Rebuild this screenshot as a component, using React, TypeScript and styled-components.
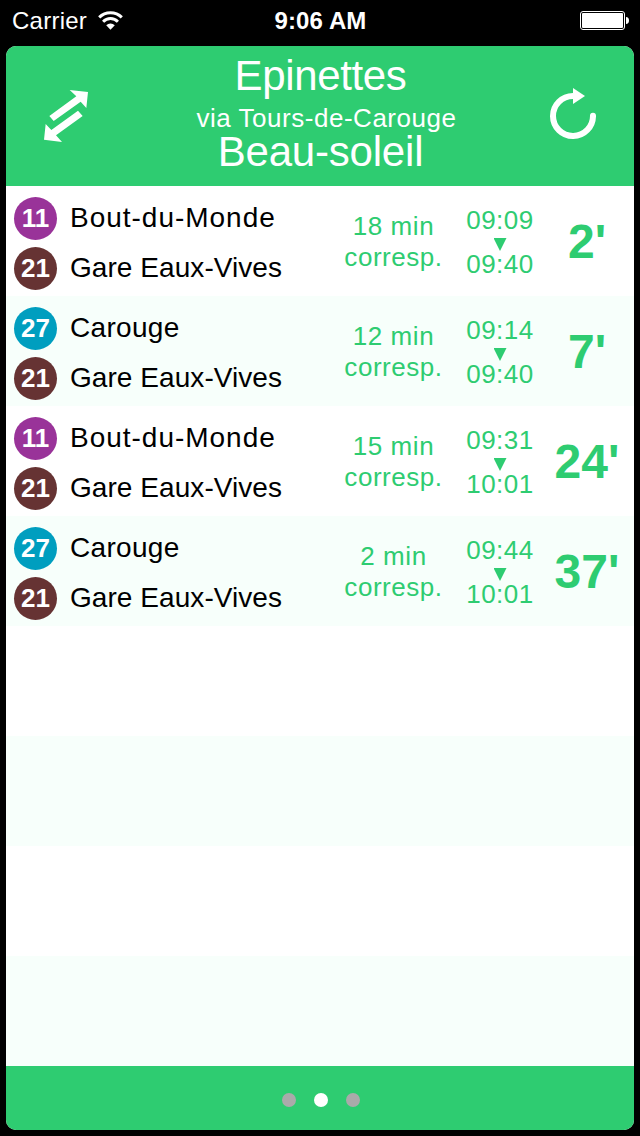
import React from "react";
import styled, { createGlobalStyle } from "styled-components";

const GREEN = "#2ecc71";

const GlobalStyle = createGlobalStyle`
  * { box-sizing: border-box; }
  body {
    margin: 0;
    background: #000;
    font-family: "Liberation Sans", Arial, sans-serif;
  }
`;

const Screen = styled.div`
  width: 640px;
  height: 1136px;
  display: flex;
  flex-direction: column;
  background: #000;
  overflow: hidden;
`;

const StatusBar = styled.header`
  height: 46px;
  flex: none;
  display: grid;
  grid-template-columns: 1fr auto 1fr;
  padding: 0 11px 5px 12px;
  align-items: center;
  color: #fff;
  font-size: 24px;
  line-height: 41px;
`;

const Carrier = styled.div`
  display: flex;
  align-items: center;
  gap: 11px;
  letter-spacing: 0.25px;
`;

const Clock = styled.div`
  font-weight: 700;
  letter-spacing: 0.1px;
`;

const BatterySlot = styled.div`
  display: flex;
  justify-content: flex-end;
`;

const Panel = styled.main`
  flex: none;
  height: 1084px;
  margin: 0 6px;
  border-radius: 10px;
  overflow: hidden;
  display: flex;
  flex-direction: column;
  background: #fff;
`;

const TripHeader = styled.section`
  flex: none;
  height: 140px;
  display: flex;
  align-items: center;
  justify-content: space-between;
  padding: 0 38px;
  background: ${GREEN};
  color: #fff;
`;

const IconButton = styled.button`
  display: flex;
  padding: 0;
  border: 0;
  background: none;
  color: inherit;
`;

const Titles = styled.div`
  align-self: flex-start;
  display: flex;
  flex-direction: column;
  align-items: center;
  padding: 1px 0 0 2px;
  white-space: nowrap;
`;

const Stop = styled.div<{ $line: number; $tracking: number }>`
  font-size: 42px;
  line-height: ${(p) => p.$line}px;
  letter-spacing: ${(p) => p.$tracking}px;
`;

const Via = styled.div`
  padding: 0 0 1px 12px;
  font-size: 26px;
  line-height: 26px;
  letter-spacing: 0.52px;
`;

const List = styled.ul`
  flex: 1;
  margin: 0;
  padding: 0;
  list-style: none;
`;

const Row = styled.li`
  height: 110px;
  display: grid;
  grid-template-columns: 327px 121px 92px 82px;
  align-items: center;
  color: ${GREEN};
  background: #fff;
  &:nth-child(even) {
    background: #f7fffb;
  }
`;

const Legs = styled.div`
  padding: 5px 0 0 8px;
`;

const Leg = styled.div`
  height: 50px;
  display: flex;
  align-items: center;
  gap: 13px;
  color: #000;
  white-space: nowrap;
`;

const Badge = styled.span<{ $color: string }>`
  width: 43px;
  height: 43px;
  flex: none;
  border-radius: 50%;
  background: ${(p) => p.$color};
  color: #fff;
  font-size: 26px;
  font-weight: 700;
  line-height: 43px;
  text-align: center;
`;

const Destination = styled.span<{ $tracking: number }>`
  font-size: 28px;
  line-height: 32px;
  padding-bottom: 2px;
  letter-spacing: ${(p) => p.$tracking}px;
`;

const Transfer = styled.div`
  padding-top: 2px;
  font-size: 26px;
  line-height: 31px;
  letter-spacing: 0.55px;
  text-align: center;
  white-space: pre-line;
`;

const Times = styled.div`
  display: flex;
  flex-direction: column;
  align-items: center;
  font-size: 26px;
  line-height: 26px;
  letter-spacing: 0.5px;
  padding-top: 2px;
`;

const DownMark = styled.span`
  width: 13px;
  height: 13px;
  margin: 5px 0 0;
  background: ${GREEN};
  clip-path: polygon(0 0, 100% 0, 50% 100%);
`;

const Wait = styled.div`
  padding-top: 2px;
  font-size: 48px;
  font-weight: 700;
  line-height: 56px;
  text-align: center;
`;

const Pager = styled.footer`
  flex: none;
  height: 64px;
  display: flex;
  align-items: center;
  justify-content: center;
  gap: 18px;
  padding: 4px 0 0 2px;
  background: ${GREEN};
`;

const Dot = styled.span<{ $active?: boolean }>`
  width: 14px;
  height: 14px;
  border-radius: 50%;
  background: ${(p) => (p.$active ? "#fff" : "#aaa")};
`;

const LINES = {
  "11": "#993399",
  "21": "#663333",
  "27": "#009ebf",
} as const;

type Line = keyof typeof LINES;

const TRACKING: Record<string, number> = {
  "Bout-du-Monde": 0.98,
  "Gare Eaux-Vives": 0.06,
  Carouge: 0.3,
};

interface Trip {
  legs: [Line, string][];
  transfer: string;
  from: string;
  to: string;
  wait: string;
}

const TRIPS: Trip[] = [
  { legs: [["11", "Bout-du-Monde"], ["21", "Gare Eaux-Vives"]], transfer: "18 min", from: "09:09", to: "09:40", wait: "2" },
  { legs: [["27", "Carouge"], ["21", "Gare Eaux-Vives"]], transfer: "12 min", from: "09:14", to: "09:40", wait: "7" },
  { legs: [["11", "Bout-du-Monde"], ["21", "Gare Eaux-Vives"]], transfer: "15 min", from: "09:31", to: "10:01", wait: "24" },
  { legs: [["27", "Carouge"], ["21", "Gare Eaux-Vives"]], transfer: "2 min", from: "09:44", to: "10:01", wait: "37" },
];

const EMPTY_ROWS = 4;

const WifiIcon = () => (
  <svg width="25" height="19" viewBox="0 0 25 19" fill="none" stroke="#fff" strokeWidth="3">
    <path d="M1.2 6.4a16 16 0 0 1 22.6 0" />
    <path d="M5.1 10.700a10.400 10.400 0 0 1 14.800 0" />
    <path d="M8.200 14.200a6 6 0 0 1 8.600 0L12.500 18.700z" fill="#fff" stroke="none" />
  </svg>
);

const BatteryIcon = () => (
  <svg width="49" height="19" viewBox="0 0 49 19">
    <rect x="0.5" y="0.5" width="44" height="18" rx="2.500" fill="none" stroke="#fff" />
    <rect x="2" y="2" width="41" height="15" rx="1" fill="#fff" />
    <path d="M46 6c2 0 3 1.500 3 3.500s-1 3.500-3 3.500z" fill="#fff" />
  </svg>
);

const SwapIcon = () => (
  <svg width="45" height="54" viewBox="132 267 135 162" fill="currentColor">
    <path d="M148 348L229 289L209 270L264 276L259 324L242 305L161 363Z" />
    <path d="M234 332L248 348L168 406L186 426L132 419L137 372L154 390Z" />
  </svg>
);

const RefreshIcon = () => (
  <svg width="46" height="58" viewBox="240 261 138 174">
    <path d="M311 288H309A60 60 0 1 0 369 347" fill="none" stroke="currentColor" strokeWidth="18" strokeLinecap="round" />
    <path d="M309 264L345 288L309 312Z" fill="currentColor" />
  </svg>
);

export default function App() {
  return (
    <>
      <GlobalStyle />
      <Screen>
        <StatusBar>
          <Carrier>
            Carrier
            <WifiIcon />
          </Carrier>
          <Clock>9:06 AM</Clock>
          <BatterySlot>
            <BatteryIcon />
          </BatterySlot>
        </StatusBar>
        <Panel>
          <TripHeader>
            <IconButton aria-label="Swap direction">
              <SwapIcon />
            </IconButton>
            <Titles>
              <Stop $line={58} $tracking={-0.35}>Epinettes</Stop>
              <Via>via Tours-de-Carouge</Via>
              <Stop $line={40} $tracking={-0.2}>Beau-soleil</Stop>
            </Titles>
            <IconButton aria-label="Refresh">
              <RefreshIcon />
            </IconButton>
          </TripHeader>
          <List>
            {TRIPS.map((trip) => (
              <Row key={trip.from}>
                <Legs>
                  {trip.legs.map(([line, name]) => (
                    <Leg key={line}>
                      <Badge $color={LINES[line]}>{line}</Badge>
                      <Destination $tracking={TRACKING[name]}>{name}</Destination>
                    </Leg>
                  ))}
                </Legs>
                <Transfer>{`${trip.transfer}\ncorresp.`}</Transfer>
                <Times>
                  <span>{trip.from}</span>
                  <DownMark />
                  <span>{trip.to}</span>
                </Times>
                <Wait>{trip.wait}'</Wait>
              </Row>
            ))}
            {Array.from({ length: EMPTY_ROWS }, (_, i) => (
              <Row key={i} />
            ))}
          </List>
          <Pager>
            <Dot />
            <Dot $active />
            <Dot />
          </Pager>
        </Panel>
      </Screen>
    </>
  );
}
